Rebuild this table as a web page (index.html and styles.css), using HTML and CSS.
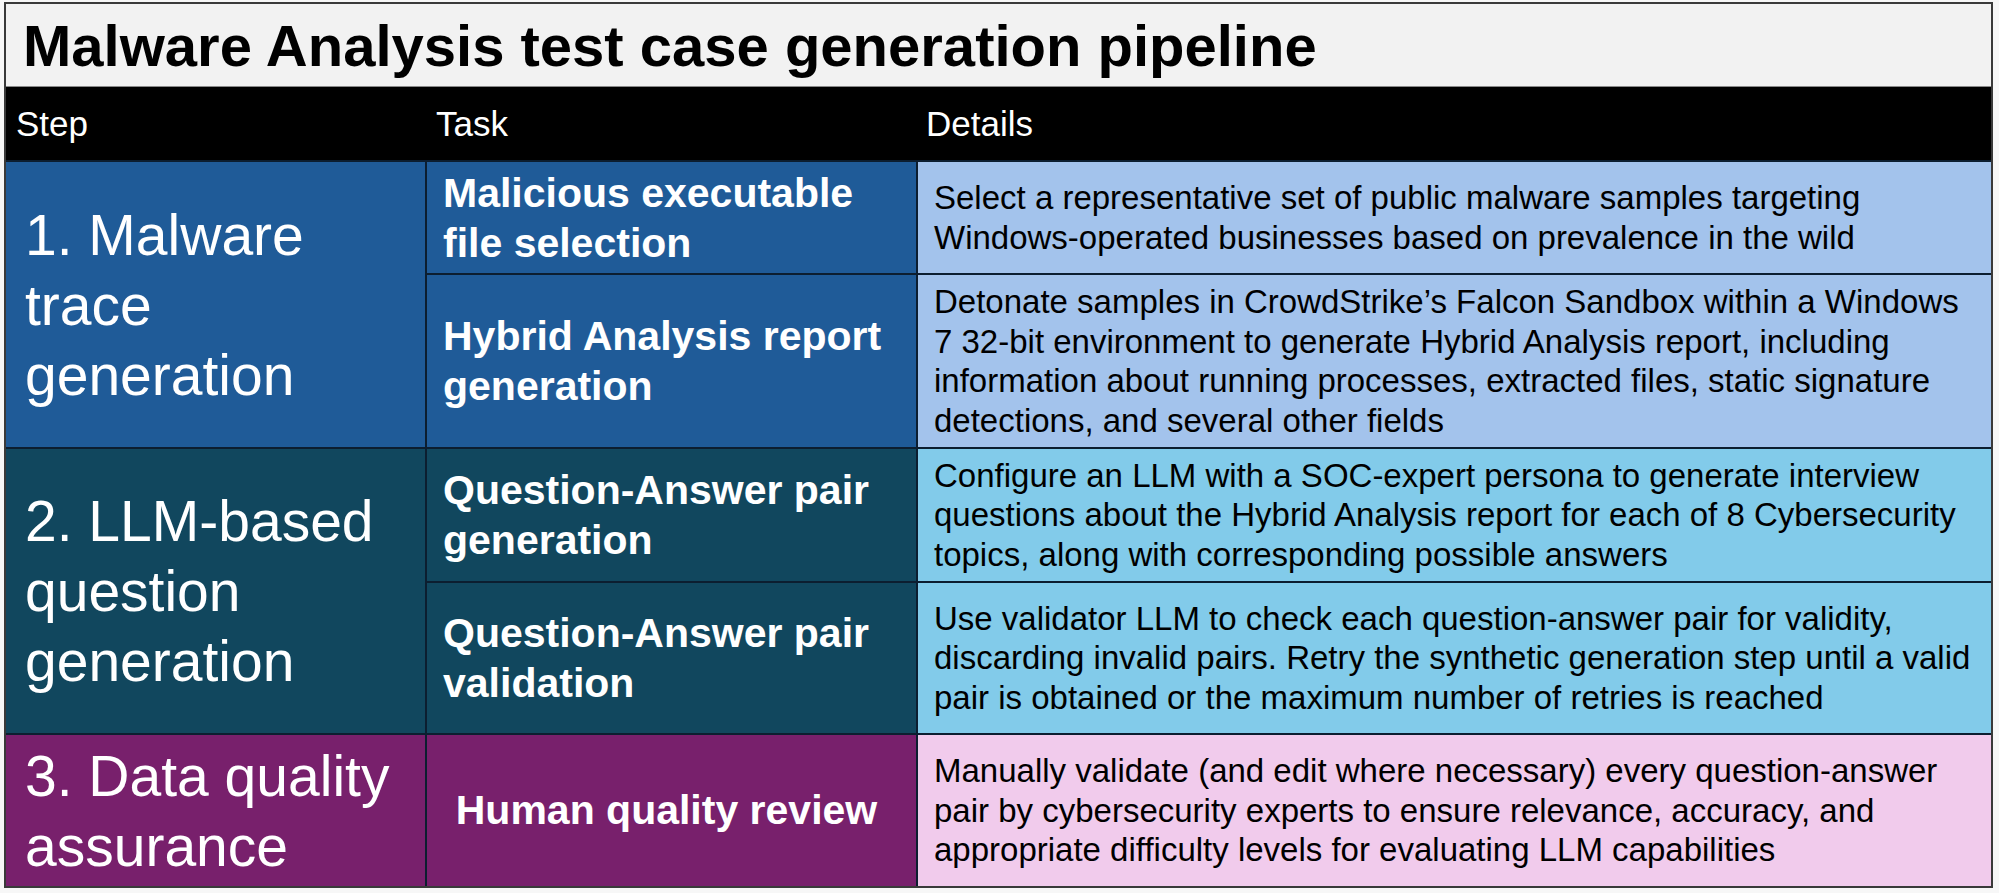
FILE: index.html
```html
<!DOCTYPE html>
<html>
<head>
<meta charset="utf-8">
<link rel="stylesheet" href="styles.css">
</head>
<body>
<div class="frame">
  <div class="title">Malware Analysis test case generation pipeline</div>
  <div class="table">
    <div class="head">Step</div>
    <div class="head">Task</div>
    <div class="head">Details</div>

    <div class="step g1 span2">1. Malware trace generation</div>
    <div class="task g1">Malicious executable file selection</div>
    <div class="detail d1">Select a representative set of public malware samples targeting Windows-operated businesses based on prevalence in the wild</div>
    <div class="task g1">Hybrid Analysis report generation</div>
    <div class="detail d1">Detonate samples in CrowdStrike’s Falcon Sandbox within a Windows 7 32-bit environment to generate Hybrid Analysis report, including information about running processes, extracted files, static signature detections, and several other fields</div>

    <div class="step g2 span2">2. LLM-based question generation</div>
    <div class="task g2">Question-Answer pair generation</div>
    <div class="detail d2">Configure an LLM with a SOC-expert persona to generate interview questions about the Hybrid Analysis report for each of 8 Cybersecurity topics, along with corresponding possible answers</div>
    <div class="task g2">Question-Answer pair validation</div>
    <div class="detail d2">Use validator LLM to check each question-answer pair for validity, discarding invalid pairs. Retry the synthetic generation step until a valid pair is obtained or the maximum number of retries is reached</div>

    <div class="step g3">3. Data quality assurance</div>
    <div class="task g3 center">Human quality review</div>
    <div class="detail d3">Manually validate (and edit where necessary) every question-answer pair by cybersecurity experts to ensure relevance, accuracy, and appropriate difficulty levels for evaluating LLM capabilities</div>
  </div>
</div>
</body>
</html>
```

FILE: styles.css
```css
* { box-sizing: border-box; }
html, body { margin: 0; padding: 0; }
body {
  background: #f7f7f7;
  font-family: "Liberation Sans", Arial, sans-serif;
  width: 1999px;
  height: 893px;
  overflow: hidden;
}
.frame {
  margin: 2px 6px 0 4px;
  border: 2px solid #3a3a3a;
  background: #0c1e30;
}
.title {
  height: 83px;
  background: #f2f2f2;
  border-bottom: 1px solid #8a8a8a;
  color: #000;
  font-weight: bold;
  font-size: 58px;
  line-height: 83px;
  padding-left: 17px;
  white-space: nowrap;
}
.table {
  display: grid;
  grid-template-columns: 419px 489px 1fr;
  grid-template-rows: 73px 111px 172px 132px 150px 151px;
  column-gap: 2px;
  row-gap: 2px;
}
.head {
  background: #000;
  color: #fff;
  font-size: 35px;
  display: flex;
  align-items: center;
  padding-left: 10px;
}
.head:nth-child(2) { margin-left: -2px; padding-left: 11px; }
.head:nth-child(3) { margin-left: -2px; padding-left: 10px; }
.step {
  color: #fff;
  font-size: 57px;
  line-height: 70px;
  display: flex;
  align-items: center;
  padding: 0 20px 0 19px;
}
.span2 { grid-row: span 2; }
.task {
  color: #fff;
  font-weight: bold;
  font-size: 41px;
  line-height: 50px;
  display: flex;
  align-items: center;
  padding: 0 12px 0 16px;
}
.task.center { justify-content: center; padding: 0 16px 2px 6px; }
.detail {
  color: #000;
  font-size: 33px;
  line-height: 39.5px;
  display: flex;
  align-items: center;
  padding: 0 6px 0 16px;
}
.g1 { background: #1f5b98; }
.g2 { background: #11475e; }
.g3 { background: #78206c; }
.d1 { background: #a3c3ec; }
.d2 { background: #82cbea; }
.d3 { background: #f1cbec; }
```
